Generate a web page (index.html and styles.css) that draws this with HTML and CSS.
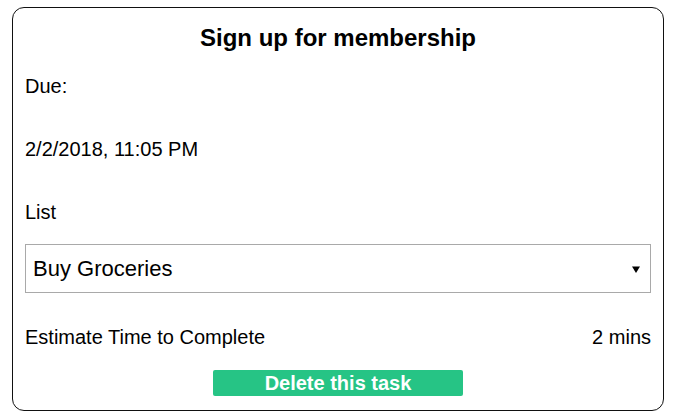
FILE: index.html
```html
<!DOCTYPE html>
<html>
<head>
<meta charset="utf-8">
<link rel="stylesheet" href="styles.css">
</head>
<body>
<div class="card">
  <h1 class="title">Sign up for membership</h1>
  <div class="label due">Due:</div>
  <div class="label date">2/2/2018, 11:05 PM</div>
  <div class="label list">List</div>
  <div class="select">
    <span class="select-text">Buy Groceries</span>
    <svg class="arrow" width="8" height="7" viewBox="0 0 8 7"><path d="M0 0.5 L8 0.5 L4 7 Z" fill="#000"/></svg>
  </div>
  <div class="row">
    <span>Estimate Time to Complete</span>
    <span>2 mins</span>
  </div>
  <div class="actions">
    <button class="delete">Delete this task</button>
  </div>
</div>
</body>
</html>
```
FILE: styles.css
```css
html, body {
  margin: 0;
  padding: 0;
  background: #fff;
}
body {
  padding: 7px 11px 0 12px;
  font-family: "Liberation Sans", Arial, sans-serif;
  color: #000;
}
.card {
  border: 1px solid #111;
  border-radius: 12px;
  padding: 16px 12px 14px 12px;
  display: flex;
  flex-direction: column;
}
.title {
  margin: 0;
  font-size: 24px;
  line-height: 28px;
  font-weight: bold;
  text-align: center;
}
.label {
  font-size: 20px;
  line-height: 23px;
}
.due { margin-top: 23px; }
.date { margin-top: 40px; }
.list { margin-top: 40px; }
.select {
  margin-top: 20px;
  height: 47px;
  border: 1px solid #a9a9a9;
  display: flex;
  align-items: center;
  justify-content: space-between;
  padding: 0 10px 0 7px;
}
.select-text {
  font-size: 22px;
}
.arrow { margin-top: 2px; }
.row {
  margin-top: 33px;
  display: flex;
  justify-content: space-between;
  font-size: 20px;
  line-height: 23px;
}
.actions {
  margin-top: 21px;
  display: flex;
  justify-content: center;
}
.delete {
  width: 250px;
  height: 26px;
  border: none;
  border-radius: 2px;
  background: #26c485;
  color: #fff;
  font-family: "Liberation Sans", Arial, sans-serif;
  font-weight: bold;
  font-size: 20px;
  line-height: 26px;
  padding: 0;
}
```
